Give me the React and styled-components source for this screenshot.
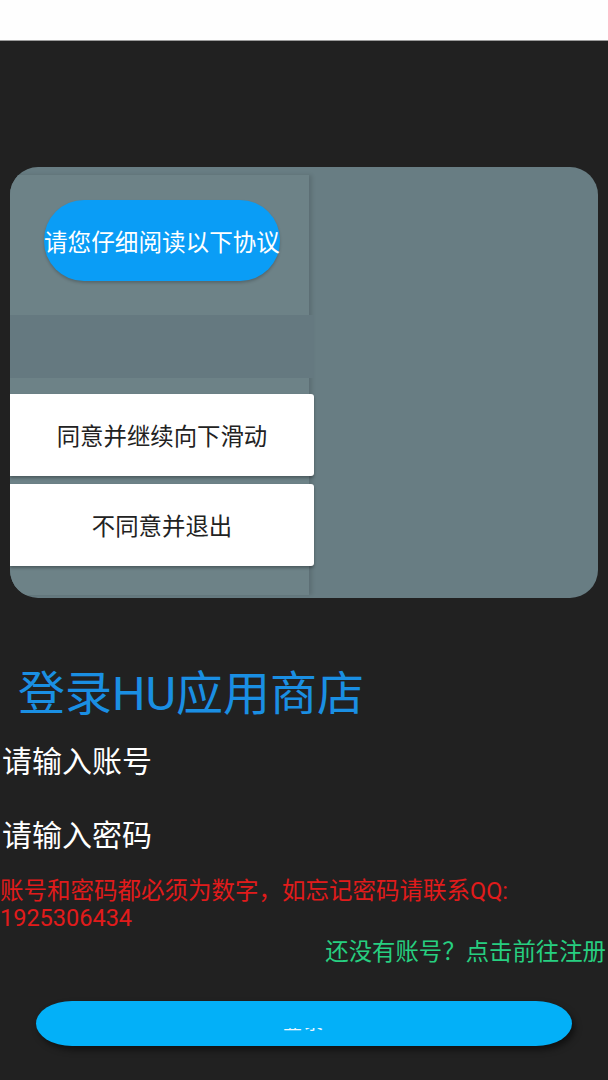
import styled, { createGlobalStyle } from 'styled-components'

const GlobalStyle = createGlobalStyle`
  html, body {
    margin: 0;
    padding: 0;
    background: #212121;
    font-family: Roboto, "Noto Sans CJK SC", sans-serif;
  }
`

const Screen = styled.div`
  width: 608px;
  min-height: 1080px;
  background: #212121;
  overflow: hidden;
`

const StatusBar = styled.div`
  height: 40px;
  background: #fefefe;
  border-bottom: 1px solid #9c9c9c;
`

const Card = styled.div`
  margin: 126px 10px 0;
  height: 431px;
  box-sizing: border-box;
  padding: 8px 0 3px;
  border-radius: 28px;
  background: #687d83;
  overflow: hidden;
  display: flex;
`

const AgreementPanel = styled.div`
  width: 299px;
  background: #6d8287;
  box-shadow: 3px 0 4px rgba(0, 0, 0, 0.12);
  display: flex;
  flex-direction: column;
`

const PillArea = styled.div`
  height: 140px;
  display: flex;
  justify-content: center;
  padding-top: 25px;
  box-sizing: border-box;
  padding-left: 5px;
`

const NoticePill = styled.div`
  width: 236px;
  height: 81px;
  border-radius: 40px;
  background: #0a9df6;
  color: #fff;
  font-size: 23.6px;
  white-space: nowrap;
  display: flex;
  align-items: center;
  justify-content: center;
  box-shadow: 0 2px 3px rgba(0, 0, 0, 0.2);
`

const ScrollBand = styled.div`
  height: 63px;
  width: 304px;
  background: #657980;
`

const ChoiceList = styled.div`
  margin-top: 16px;
  display: flex;
  flex-direction: column;
  gap: 8px;
`

const ChoiceButton = styled.div`
  width: 304px;
  height: 82px;
  background: #fff;
  border-radius: 0 3px 3px 0;
  box-shadow: 0 2px 3px rgba(0, 0, 0, 0.3);
  color: #222;
  font-size: 23.4px;
  display: flex;
  align-items: center;
  justify-content: center;
`

const Title = styled.h1`
  margin: 68px 0 0;
  padding-left: 18px;
  font-size: 47px;
  font-weight: 400;
  line-height: 55px;
  color: #1a8fe3;
`

const Fields = styled.div`
  margin-top: 1px;
`

const Field = styled.div`
  height: 74px;
  padding-left: 2px;
  display: flex;
  align-items: center;
  color: #fff;
  font-size: 30px;
`

const Warning = styled.p`
  margin: 8px 0 0;
  color: #e11b1b;
  font-size: 23.5px;
  line-height: 27px;
`

const RegisterLink = styled.div`
  margin-top: 6px;
  text-align: right;
  padding-right: 2px;
  color: #27cf80;
  font-size: 23.4px;
  line-height: 28px;
`

const LoginButton = styled.div`
  margin: 35px 36px 0;
  height: 45px;
  border-radius: 36px / 22.5px;
  background: #03b0f8;
  box-shadow: 3px 4px 6px rgba(0, 0, 0, 0.5);
  display: flex;
  align-items: center;
  justify-content: center;
`

const ClippedLabel = styled.span`
  display: block;
  height: 5px;
  margin-top: 14px;
  overflow: hidden;
  color: #eaf6ff;
  font-size: 19px;
  line-height: 19px;
  letter-spacing: 2px;
  white-space: nowrap;
`

const LabelText = styled.span`
  display: block;
  margin-top: -15px;
`

export default function App() {
  return (
    <>
      <GlobalStyle />
      <Screen>
        <StatusBar />
        <Card>
          <AgreementPanel>
            <PillArea>
              <NoticePill>请您仔细阅读以下协议</NoticePill>
            </PillArea>
            <ScrollBand />
            <ChoiceList>
              <ChoiceButton>同意并继续向下滑动</ChoiceButton>
              <ChoiceButton>不同意并退出</ChoiceButton>
            </ChoiceList>
          </AgreementPanel>
        </Card>
        <Title>登录HU应用商店</Title>
        <Fields>
          <Field>请输入账号</Field>
          <Field>请输入密码</Field>
        </Fields>
        <Warning>
          账号和密码都必须为数字，如忘记密码请联系QQ:
          <br />
          1925306434
        </Warning>
        <RegisterLink>还没有账号？点击前往注册</RegisterLink>
        <LoginButton>
          <ClippedLabel>
            <LabelText>登录</LabelText>
          </ClippedLabel>
        </LoginButton>
      </Screen>
    </>
  )
}
